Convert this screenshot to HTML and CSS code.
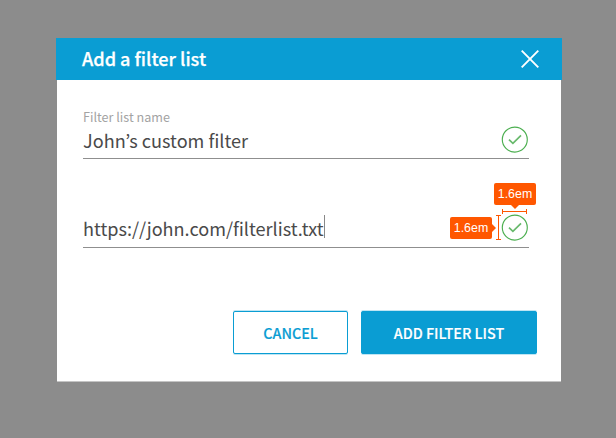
FILE: index.html
```html
<!DOCTYPE html>
<html lang="en">
<head>
<meta charset="utf-8">
<title>Add a filter list</title>
<link rel="stylesheet" href="styles.css">
</head>
<body>
<section class="dialog" role="dialog">
  <header class="dialog-header">
    <h1 class="title">Add a filter list</h1>
    <svg class="close" width="18" height="18" viewBox="0 0 18 18"><path d="M.7.7 17.3 17.3M17.3.7.7 17.3"/></svg>
  </header>
  <div class="dialog-body">
    <div class="field">
      <div class="field-text">
        <div class="label">Filter list name</div>
        <div class="value name">John’s custom filter</div>
      </div>
      <span class="status">
        <svg class="check" width="27" height="27" viewBox="0 0 27 27"><circle cx="13.8" cy="13.6" r="12.5"/><path d="M8 13.7 11.9 17.4 20 9.4"/></svg>
      </span>
    </div>
    <div class="field field-url">
      <div class="field-text">
        <div class="value url"><span class="url-text">https://john.com/filterlist.txt</span><i class="caret"></i></div>
      </div>
      <span class="status">
        <svg class="check" width="27" height="27" viewBox="0 0 27 27"><circle cx="13.8" cy="13.6" r="12.5"/><path d="M8 13.7 11.9 17.4 20 9.4"/></svg>
        <span class="measure measure-top">1.6em</span>
        <span class="measure measure-left">1.6em</span>
        <svg class="rule rule-top" width="25" height="5" viewBox="0 0 25 5"><path d="M.5 0V5M24.5 0V5M0 2.5H25"/></svg>
        <svg class="rule rule-left" width="5" height="25" viewBox="0 0 5 25"><path d="M0 .5H5M0 24.5H5M2.5 0V25"/></svg>
      </span>
    </div>
    <div class="actions">
      <div class="button cancel"><span>CANCEL</span></div>
      <div class="button add"><span>ADD FILTER LIST</span></div>
    </div>
  </div>
</section>
</body>
</html>
```
FILE: styles.css
```css
* { box-sizing: border-box; }
body {
  margin: 0;
  height: 438px;
  padding: 38px 54px 0 56px;
  background: #8c8c8c;
  font-family: "Noto Sans CJK KR", "Noto Sans", sans-serif;
  overflow: hidden;
}
.dialog { width: 506px; }
.dialog-header {
  display: flex;
  align-items: center;
  justify-content: space-between;
  height: 42px;
  padding: 0 23px 0 26px;
  background: #0a9dd3;
}
.title {
  margin: 0;
  padding-bottom: 2px;
  font-size: 18.1px;
  font-weight: 500;
  line-height: 40px;
  color: #fff;
  -webkit-text-stroke: .25px #fff;
}
.close { fill: none; stroke: #fff; stroke-width: 1.9; }
.dialog-body {
  height: 302px;
  margin: 0 1px;
  padding: 28px 24px 0 26px;
  background: #fff;
  border-bottom: 1px solid #c4c4c4;
}
.field {
  display: flex;
  justify-content: space-between;
  align-items: flex-end;
  width: 446px;
  height: 51px;
  border-bottom: 1px solid #8f8f8f;
}
.field-url { margin-top: 38px; }
.label { font-size: 12.6px; line-height: 18px; color: #a3a3a3; }
.value {
  display: flex;
  height: 32px;
  font-size: 18.1px;
  line-height: 28px;
  color: #4a4a4a;
  white-space: nowrap;
}
.url { height: 33px; }
.caret { width: 1px; height: 23px; margin-top: 1px; background: #888; }
.status { position: relative; width: 27px; height: 27px; margin: 0 1px 5px 0; }
.field-url .status { margin-bottom: 6px; }
.check { display: block; fill: none; stroke: #4caf50; stroke-width: 1.15; overflow: visible; }
.check path { stroke: #68b96c; stroke-width: 1.7; }
.measure {
  position: absolute;
  width: 42px;
  height: 22px;
  border-radius: 2px;
  background: #ff5700;
  color: #fff;
  font: 12.4px/23px "Liberation Sans", sans-serif;
  text-align: center;
}
.measure::after {
  content: "";
  position: absolute;
  border: 4px solid transparent;
}
.measure-top { left: -7px; top: -31px; }
.measure-top::after { left: 17px; top: 22px; border-top-color: #ff5700; border-bottom: 0; }
.measure-left { left: -51px; top: 3px; }
.measure-left::after { left: 42px; top: 7px; border-left-color: #ff5700; border-right: 0; }
.rule { position: absolute; fill: none; stroke: #ff5700; }
.rule-top { left: 1px; top: -5px; }
.rule-left { left: -5px; top: 1px; }
.actions {
  display: flex;
  justify-content: flex-end;
  gap: 13px;
  margin-top: 63px;
}
.button {
  height: 43px;
  border: 1px solid #0a9dd3;
  border-radius: 2px;
  box-shadow: 0 1px 0 #bfe5f3, 0 -1px 0 #bfe5f3;
  font-size: 14.35px;
  font-weight: 500;
  line-height: 42px;
  text-align: center;
}
.cancel { width: 115px; background: #fff; color: #0a9dd3; }
.add { width: 176px; background: #0a9dd3; color: #fff; }
.button span { -webkit-text-stroke: .15px currentColor; }
```
